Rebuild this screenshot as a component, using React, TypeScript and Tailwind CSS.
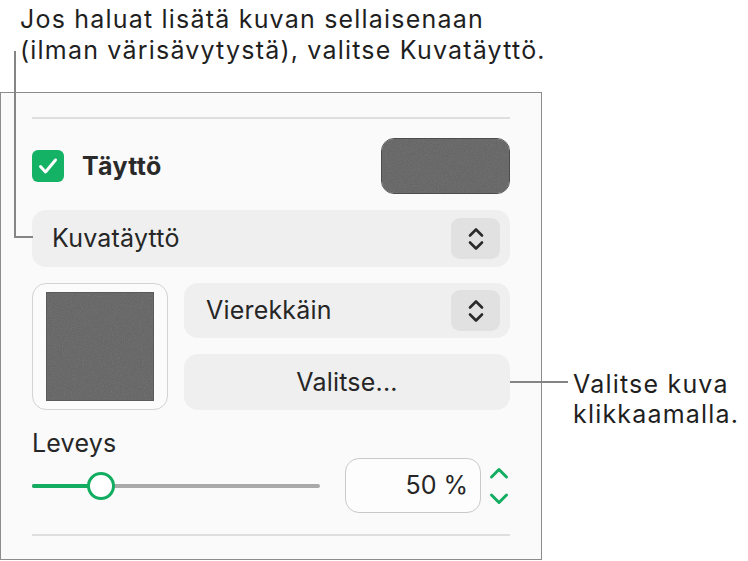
import React from "react";

const GREEN = "#12ad60";

function Chevrons() {
  return (
    <svg width="16" height="26" viewBox="0 0 16 26" fill="none">
      <path d="M2 9.5 L8 3.5 L14 9.5" stroke="#2a2a2a" strokeWidth="2.6" strokeLinecap="round" strokeLinejoin="round" />
      <path d="M2 16.5 L8 22.5 L14 16.5" stroke="#2a2a2a" strokeWidth="2.6" strokeLinecap="round" strokeLinejoin="round" />
    </svg>
  );
}

// grey paper-like texture used for the fill swatch and the image well
function Texture({ id }: { id: string }) {
  return (
    <svg className="h-full w-full" preserveAspectRatio="none">
      <filter id={id}>
        <feTurbulence type="fractalNoise" baseFrequency="0.9" numOctaves="2" seed="3" />
        <feColorMatrix type="saturate" values="0" />
        <feComponentTransfer>
          <feFuncA type="linear" slope="0.18" />
        </feComponentTransfer>
      </filter>
      <rect width="100%" height="100%" fill="#626262" />
      <rect width="100%" height="100%" filter={`url(#${id})`} />
    </svg>
  );
}

function PopUp({ label, pl }: { label: string; pl: string }) {
  return (
    <div className={`flex h-full items-center justify-between rounded-[14px] bg-[#efefef] ${pl} pr-[10px]`}>
      <span className="text-[25px] leading-none tracking-[0.2px] text-[#262626]">{label}</span>
      <span className="flex h-[41px] w-[49px] items-center justify-center rounded-[9px] bg-[#e1e1e1]">
        <Chevrons />
      </span>
    </div>
  );
}

export default function App() {
  return (
    <div className="relative h-[561px] w-[748px] overflow-hidden bg-white font-['Inter','Noto_Sans',sans-serif] text-[#1f1f1f]">
      {/* callout above */}
      <p className="pl-[20px] pt-[4px] text-[25px] leading-[31px] tracking-[1.2px]">
        Jos haluat lisätä kuvan sellaisenaan
        <br />
        (ilman värisävytystä), valitse Kuvatäyttö.
      </p>

      <div className="mt-[26px] flex items-start">
        {/* inspector panel */}
        <div className="flex h-[468px] w-[542px] flex-col border border-[#8c8c8c] bg-[#fafafa] px-[31px] pt-[24px]">
          <div className="h-[2px] bg-[#dedede]" />

          {/* fill row */}
          <div className="mt-[19px] flex h-[56px] items-center justify-between">
            <div className="flex items-center gap-[18px]">
              <span className="flex h-[32px] w-[32px] items-center justify-center rounded-[6px] bg-[#14b264]">
                <svg width="32" height="32" viewBox="0 0 32 32" fill="none">
                  <path d="M8.5 16.5 L13.5 22 L23.5 10" stroke="white" strokeWidth="3" strokeLinecap="round" strokeLinejoin="round" />
                </svg>
              </span>
              <span className="text-[25px] font-bold leading-none tracking-[0.3px] text-[#2a2a2a]">Täyttö</span>
            </div>
            <div className="h-[56px] w-[129px] overflow-hidden rounded-[13px] border border-[#4d4d4d]">
              <Texture id="swatch-noise" />
            </div>
          </div>

          {/* fill type */}
          <div className="mt-[16px] h-[57px]">
            <PopUp label="Kuvatäyttö" pl="pl-[20px]" />
          </div>

          {/* image + options */}
          <div className="mt-[16px] flex h-[127px] gap-[16px]">
            <div className="flex w-[136px] items-center justify-center rounded-[14px] border border-[#d3d3d3] bg-[#fbfbfb]">
              <div className="h-[109px] w-[108px] border border-[#5a5a5a]">
                <Texture id="image-noise" />
              </div>
            </div>
            <div className="flex flex-1 flex-col gap-[16px]">
              <div className="h-[55px]">
                <PopUp label="Vierekkäin" pl="pl-[22px]" />
              </div>
              <button className="flex h-[56px] items-center justify-center rounded-[14px] bg-[#efefef] text-[25px] leading-none tracking-[0.2px] text-[#262626]">
                Valitse...
              </button>
            </div>
          </div>

          {/* width */}
          <div className="mt-[19px] text-[25px] leading-[29px] tracking-[0.2px] text-[#262626]">Leveys</div>
          <div className="flex h-[55px] items-center">
            <div className="relative flex h-[28px] w-[288px] items-center">
              <div className="h-[4px] w-full rounded-full bg-[#a9a9a9]" />
              <div className="absolute left-0 top-[12px] h-[4px] w-[70px] rounded-full" style={{ backgroundColor: GREEN }} />
              <div
                className="absolute left-[55px] top-0 h-[28px] w-[28px] rounded-full border-[3.5px] bg-white"
                style={{ borderColor: GREEN }}
              />
            </div>
            <div className="ml-[25px] flex h-[55px] w-[136px] items-center justify-end rounded-[14px] border-[1.5px] border-[#c9c9c9] bg-[#fdfdfd] pr-[12px] text-[25px] leading-none text-[#262626]">
              50 %
            </div>
            <svg className="ml-[8px]" width="20" height="38" viewBox="0 0 20 38" fill="none">
              <path d="M2.5 10 L10 2.5 L17.5 10" stroke={GREEN} strokeWidth="3" strokeLinecap="round" strokeLinejoin="round" />
              <path d="M2.5 28 L10 35.5 L17.5 28" stroke={GREEN} strokeWidth="3" strokeLinecap="round" strokeLinejoin="round" />
            </svg>
          </div>

          <div className="mt-[21px] h-[2px] bg-[#dedede]" />
        </div>

        {/* callout right */}
        <p className="ml-[31px] mt-[277px] text-[25px] leading-[30px] tracking-[1.2px] text-[#1f1f1f]">
          Valitse kuva
          <br />
          klikkaamalla.
        </p>
      </div>

      {/* leader lines */}
      <div className="absolute left-[14px] top-[51px] h-[187px] w-[2px] bg-[#858585]" />
      <div className="absolute left-[14px] top-[236px] h-[2px] w-[19px] bg-[#858585]" />
      <div className="absolute left-[510px] top-[381px] h-[2px] w-[58px] bg-[#858585]" />
    </div>
  );
}
